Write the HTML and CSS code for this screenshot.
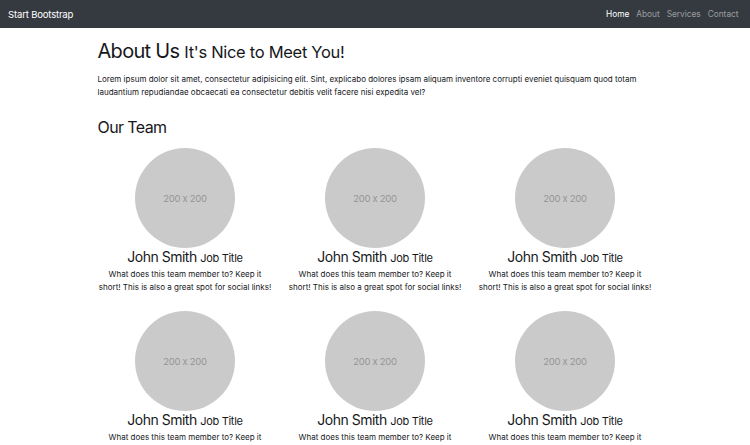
FILE: index.html
```html
<!DOCTYPE html>
<html lang="en">
<head>
<meta charset="utf-8">
<title>About - Start Bootstrap</title>
<link rel="stylesheet" href="styles.css">
</head>
<body>
<nav class="navbar">
  <a class="brand" href="#">Start Bootstrap</a>
  <ul class="nav">
    <li><a class="nav-link active" href="#">Home</a></li>
    <li><a class="nav-link" href="#">About</a></li>
    <li><a class="nav-link" href="#">Services</a></li>
    <li><a class="nav-link" href="#">Contact</a></li>
  </ul>
</nav>
<main class="container">
  <h1 class="title">About Us <small>It's Nice to Meet You!</small></h1>
  <p class="lead-text">Lorem ipsum dolor sit amet, consectetur adipisicing elit. Sint, explicabo dolores ipsam aliquam inventore corrupti eveniet quisquam quod totam laudantium repudiandae obcaecati ea consectetur debitis velit facere nisi expedita vel?</p>
  <h2 class="section-title">Our Team</h2>
  <div class="team">
    <div class="member">
      <div class="avatar"><span>200 x 200</span></div>
      <h3 class="name">John Smith <small>Job Title</small></h3>
      <p class="desc">What does this team member to? Keep it short! This is also a great spot for social links!</p>
    </div>
    <div class="member">
      <div class="avatar"><span>200 x 200</span></div>
      <h3 class="name">John Smith <small>Job Title</small></h3>
      <p class="desc">What does this team member to? Keep it short! This is also a great spot for social links!</p>
    </div>
    <div class="member">
      <div class="avatar"><span>200 x 200</span></div>
      <h3 class="name">John Smith <small>Job Title</small></h3>
      <p class="desc">What does this team member to? Keep it short! This is also a great spot for social links!</p>
    </div>
    <div class="member">
      <div class="avatar"><span>200 x 200</span></div>
      <h3 class="name">John Smith <small>Job Title</small></h3>
      <p class="desc">What does this team member to? Keep it short! This is also a great spot for social links!</p>
    </div>
    <div class="member">
      <div class="avatar"><span>200 x 200</span></div>
      <h3 class="name">John Smith <small>Job Title</small></h3>
      <p class="desc">What does this team member to? Keep it short! This is also a great spot for social links!</p>
    </div>
    <div class="member">
      <div class="avatar"><span>200 x 200</span></div>
      <h3 class="name">John Smith <small>Job Title</small></h3>
      <p class="desc">What does this team member to? Keep it short! This is also a great spot for social links!</p>
    </div>
  </div>
</main>
</body>
</html>
```
FILE: styles.css
```css
* { box-sizing: border-box; }
html, body {
  margin: 0;
  padding: 0;
  background: #fff;
  color: #16181b;
  font-family: Inter, "Noto Sans", sans-serif;
}
a { text-decoration: none; }

.navbar {
  height: 28px;
  background: #343a40;
  display: flex;
  align-items: center;
  justify-content: space-between;
  padding: 0 8px;
}
.brand {
  color: #fff;
  font-size: 9.6px;
  letter-spacing: -0.2px;
}
.nav {
  list-style: none;
  margin: 0;
  padding: 0;
  display: flex;
}
.nav-link {
  display: block;
  padding: 0 3.5px;
  font-size: 8.3px;
  color: rgba(255, 255, 255, 0.5);
}
.nav-link.active { color: #fff; }

.container {
  width: 555px;
  margin: 0 auto;
}
.title {
  margin: 11px 0 0;
  font-size: 20px;
  line-height: 24px;
  font-weight: 400;
  letter-spacing: -0.7px;
}
.title small {
  font-size: 16.5px;
  letter-spacing: -0.3px;
}
.lead-text {
  margin: 9px 0 0;
  font-size: 8px;
  line-height: 13px;
}
.section-title {
  margin: 19px 0 0;
  font-size: 16px;
  line-height: 19px;
  font-weight: 400;
  letter-spacing: -0.6px;
}
.team {
  margin: 11px -7.5px 0;
  display: grid;
  grid-template-columns: repeat(3, 1fr);
  row-gap: 17px;
}
.member {
  display: flex;
  flex-direction: column;
  align-items: center;
  padding: 0 7.5px;
  text-align: center;
}
.avatar {
  width: 100px;
  height: 100px;
  border-radius: 50%;
  background: #cacaca;
  display: flex;
  align-items: center;
  justify-content: center;
}
.avatar span {
  font-size: 9.5px;
  color: #959595;
  letter-spacing: -0.3px;
}
.name {
  margin: 0;
  font-size: 14px;
  line-height: 17px;
  font-weight: 400;
  letter-spacing: -0.5px;
}
.name small { font-size: 11px; letter-spacing: -0.3px; }
.desc {
  margin: 1px 0 0;
  font-size: 8px;
  line-height: 13px;
}
```
